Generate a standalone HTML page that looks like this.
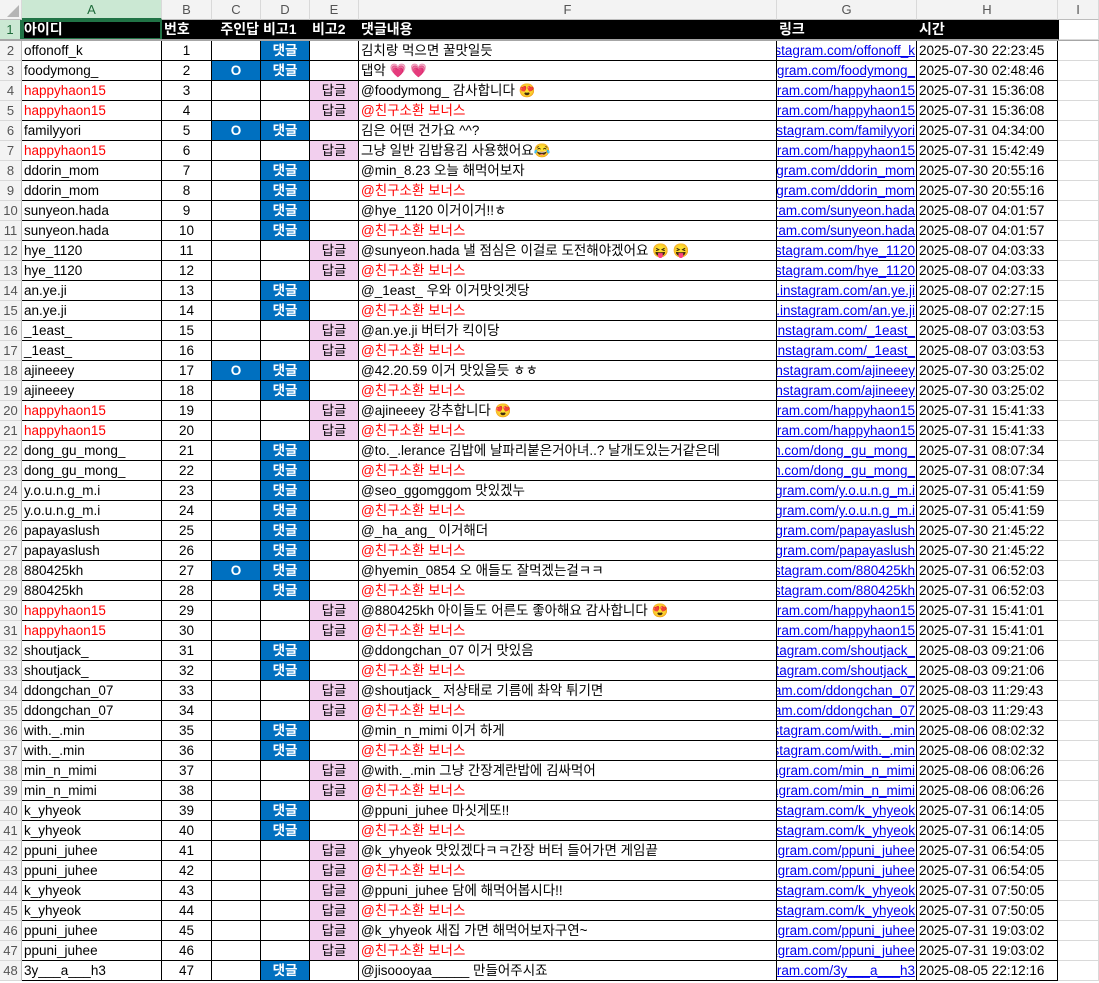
<!DOCTYPE html>
<html><head><meta charset="utf-8"><style>
body{margin:0;width:1099px;height:983px;overflow:hidden;background:#fff;font-family:"Liberation Sans","Noto Sans CJK KR",sans-serif;font-size:13.5px;position:relative}
.c{position:absolute;box-sizing:border-box;border-right:1px solid #000;border-bottom:1px solid #000;white-space:nowrap;overflow:hidden;line-height:19px;padding:0 2px;color:#000}
.h{position:absolute;box-sizing:border-box;background:#f3f3f3;border-right:1px solid #d9d9d9;border-bottom:1px solid #bdbdbd;text-align:center;color:#555;font-size:13px;line-height:19px}
.rn{position:absolute;box-sizing:border-box;background:#f3f3f3;border-right:1px solid #bdbdbd;border-bottom:1px solid #d9d9d9;text-align:center;color:#555;line-height:19px;font-size:13px}
.ctr{text-align:center}.b{background:#0070c0;color:#fff;font-weight:bold}.p{background:#f2cfee}
.red{color:#f00}.lnk{color:#00e;text-decoration:underline;display:flex;justify-content:flex-end;padding:0 1px}
.hd{background:#000;color:#fff;font-weight:bold;font-size:14px;border-right:none;border-bottom:none}
</style></head><body>
<script>
const X=[0,22,162,212,261,310,359,777,917,1058,1099];
const L="ABCDEFGHI";
let h='';
h+=`<div class="h" style="left:0;top:0;width:22px;height:20px"><div style="position:absolute;right:2px;bottom:2px;width:0;height:0;border-left:12px solid transparent;border-bottom:12px solid #b5b5b5"></div></div>`;
for(let i=0;i<9;i++){let s=i==0?'background:#cbe8d3;color:#1e6b3a;border-bottom:2px solid #217346;':'';
h+=`<div class="h" style="left:${X[i+1]}px;top:0;width:${X[i+2]-X[i+1]}px;height:20px;${s}">${L[i]}</div>`;}
h+=`<div class="rn" style="left:0;top:20px;width:22px;height:20px;background:#cbe8d3;color:#1e6b3a;border-right:2px solid #217346">1</div>`;
const hd=['아이디','번호','주인답','비고1','비고2','댓글내용','링크','시간'];
const al=['left','left','right','left','left','left','left','left'];
for(let i=0;i<8;i++)h+=`<div class="c hd" style="left:${X[i+1]}px;top:20px;width:${X[i+2]-X[i+1]}px;height:20px;text-align:${al[i]}">${hd[i]}</div>`;
h+=`<div style="position:absolute;left:22px;top:20px;width:140px;height:20px;box-sizing:border-box;border:2px solid #217346"></div>`;
h+=`<div style="position:absolute;left:0;top:39px;width:1099px;height:2px;background:#a6a6a6"></div>`;
const R='@친구소환 보너스';
const d=[
['offonoff_k','','D','김치랑 먹으면 꿀맛일듯','2025-07-30 22:23:45'],
['foodymong_','O','D','댑악 💗 💗','2025-07-30 02:48:46'],
['happyhaon15','','E','@foodymong_ 감사합니다 😍','2025-07-31 15:36:08'],
['happyhaon15','','E',R,'2025-07-31 15:36:08'],
['familyyori','O','D','김은 어떤 건가요 ^^?','2025-07-31 04:34:00'],
['happyhaon15','','E','그냥 일반 김밥용김 사용했어요😂','2025-07-31 15:42:49'],
['ddorin_mom','','D','@min_8.23 오늘 해먹어보자','2025-07-30 20:55:16'],
['ddorin_mom','','D',R,'2025-07-30 20:55:16'],
['sunyeon.hada','','D','@hye_1120 이거이거!!ㅎ','2025-08-07 04:01:57'],
['sunyeon.hada','','D',R,'2025-08-07 04:01:57'],
['hye_1120','','E','@sunyeon.hada 낼 점심은 이걸로 도전해야겠어요 😝 😝','2025-08-07 04:03:33'],
['hye_1120','','E',R,'2025-08-07 04:03:33'],
['an.ye.ji','','D','@_1east_ 우와 이거맛잇겟당','2025-08-07 02:27:15'],
['an.ye.ji','','D',R,'2025-08-07 02:27:15'],
['_1east_','','E','@an.ye.ji 버터가 킥이당','2025-08-07 03:03:53'],
['_1east_','','E',R,'2025-08-07 03:03:53'],
['ajineeey','O','D','@42.20.59 이거 맛있을듯 ㅎㅎ','2025-07-30 03:25:02'],
['ajineeey','','D',R,'2025-07-30 03:25:02'],
['happyhaon15','','E','@ajineeey 강추합니다 😍','2025-07-31 15:41:33'],
['happyhaon15','','E',R,'2025-07-31 15:41:33'],
['dong_gu_mong_','','D','@to._.lerance 김밥에 날파리붙은거아녀..? 날개도있는거같은데','2025-07-31 08:07:34'],
['dong_gu_mong_','','D',R,'2025-07-31 08:07:34'],
['y.o.u.n.g_m.i','','D','@seo_ggomggom 맛있겠누','2025-07-31 05:41:59'],
['y.o.u.n.g_m.i','','D',R,'2025-07-31 05:41:59'],
['papayaslush','','D','@_ha_ang_ 이거해더','2025-07-30 21:45:22'],
['papayaslush','','D',R,'2025-07-30 21:45:22'],
['880425kh','O','D','@hyemin_0854 오 애들도 잘먹겠는걸ㅋㅋ','2025-07-31 06:52:03'],
['880425kh','','D',R,'2025-07-31 06:52:03'],
['happyhaon15','','E','@880425kh 아이들도 어른도 좋아해요 감사합니다 😍','2025-07-31 15:41:01'],
['happyhaon15','','E',R,'2025-07-31 15:41:01'],
['shoutjack_','','D','@ddongchan_07 이거 맛있음','2025-08-03 09:21:06'],
['shoutjack_','','D',R,'2025-08-03 09:21:06'],
['ddongchan_07','','E','@shoutjack_ 저상태로 기름에 촤악 튀기면','2025-08-03 11:29:43'],
['ddongchan_07','','E',R,'2025-08-03 11:29:43'],
['with._.min','','D','@min_n_mimi 이거 하게','2025-08-06 08:02:32'],
['with._.min','','D',R,'2025-08-06 08:02:32'],
['min_n_mimi','','E','@with._.min 그냥 간장계란밥에 김싸먹어','2025-08-06 08:06:26'],
['min_n_mimi','','E',R,'2025-08-06 08:06:26'],
['k_yhyeok','','D','@ppuni_juhee 마싯게또!!','2025-07-31 06:14:05'],
['k_yhyeok','','D',R,'2025-07-31 06:14:05'],
['ppuni_juhee','','E','@k_yhyeok 맛있겠다ㅋㅋ간장 버터 들어가면 게임끝','2025-07-31 06:54:05'],
['ppuni_juhee','','E',R,'2025-07-31 06:54:05'],
['k_yhyeok','','E','@ppuni_juhee 담에 해먹어봅시다!!','2025-07-31 07:50:05'],
['k_yhyeok','','E',R,'2025-07-31 07:50:05'],
['ppuni_juhee','','E','@k_yhyeok 새집 가면 해먹어보자구연~','2025-07-31 19:03:02'],
['ppuni_juhee','','E',R,'2025-07-31 19:03:02'],
['3y___a___h3','','D','@jisoooyaa_____ 만들어주시죠','2025-08-05 22:12:16']];
d.forEach((r,k)=>{const n=k+2,t=20*n+1;
const cell=(i,cls,txt,st='')=>`<div class="c ${cls}" style="left:${X[i]}px;top:${t}px;width:${X[i+1]-X[i]}px;height:20px;${st}">${txt}</div>`;
h+=`<div class="rn" style="left:0;top:${t}px;width:22px;height:20px">${n}</div>`;
const red=r[0]=='happyhaon15';
h+=cell(1,red?'red':'',r[0]);
h+=cell(2,'ctr',k+1);
h+=cell(3,r[1]?'ctr b':'',r[1]);
h+=cell(4,r[2]=='D'?'ctr b':'',r[2]=='D'?'댓글':'');
h+=cell(5,r[2]=='E'?'ctr p':'',r[2]=='E'?'답글':'');
h+=cell(6,r[3]==R?'red':'',r[3]);
h+=cell(7,'lnk','<span>https://www.instagram.com/'+r[0]+'</span>');
h+=cell(8,'',r[4]);
h+=`<div class="c" style="left:1058px;top:${t}px;width:41px;height:20px;border-color:#d9d9d9"></div>`;
});
h+=`<div class="c" style="left:1058px;top:20px;width:41px;height:20px;border-color:#d9d9d9;border-left:1px solid #000"></div>`;
document.body.innerHTML=h;
</script>
</body></html>
